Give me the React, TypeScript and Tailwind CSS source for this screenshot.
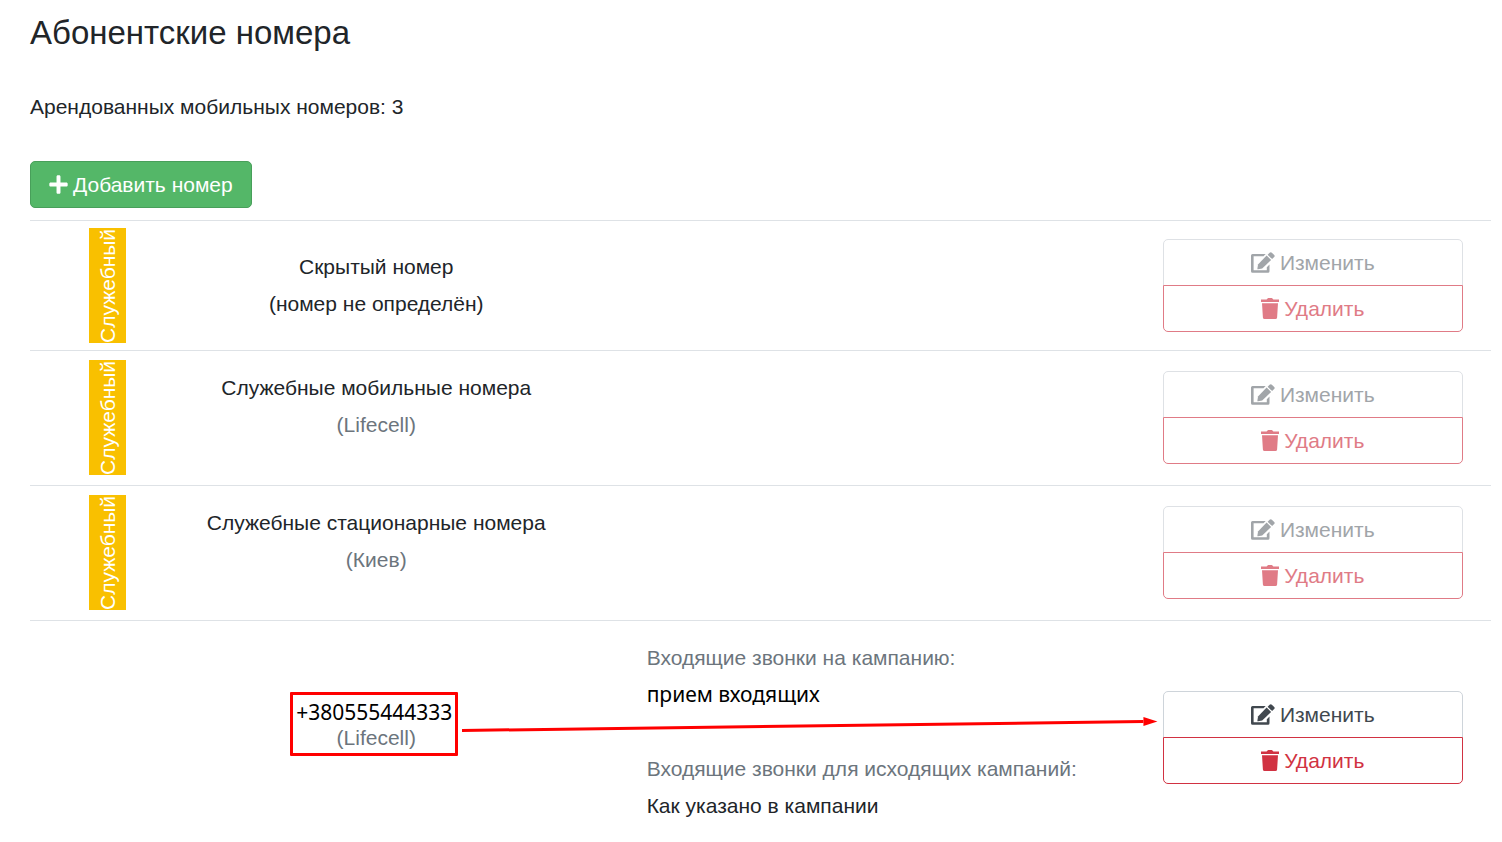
import type { ReactNode } from 'react';
import { FaPlus } from 'react-icons/fa';

type NumberRow = {
  id: number;
  service: boolean;
  name: ReactNode;
  details?: ReactNode;
  height: string;
};

const rows: NumberRow[] = [
  {
    id: 1,
    service: true,
    height: 'h-[130px]',
    name: (
      <div className="pb-0.5">
        <p>Скрытый номер</p>
        <p>(номер не определён)</p>
      </div>
    ),
  },
  {
    id: 2,
    service: true,
    height: 'h-[135px]',
    name: (
      <div className="pb-6">
        <p>Служебные мобильные номера</p>
        <p className="text-[#6c757d]">(Lifecell)</p>
      </div>
    ),
  },
  {
    id: 3,
    service: true,
    height: 'h-[135px]',
    name: (
      <div className="pb-6">
        <p>Служебные стационарные номера</p>
        <p className="text-[#6c757d]">(Киев)</p>
      </div>
    ),
  },
  {
    id: 4,
    service: false,
    height: 'h-[222px]',
    name: (
      <div className="mr-1 mb-4 flex justify-center">
        <div className="rounded-[1px] border-3 border-[#ff0000] px-[3px] pt-1 pb-0.5 leading-[26px]">
          <p className="font-['Noto_Sans',sans-serif] text-black">+380555444333</p>
          <p className="pl-1 text-[#6c757d]">(Lifecell)</p>
        </div>
      </div>
    ),
    details: (
      <>
        <p className="text-[#6c757d]">Входящие звонки на кампанию:</p>
        <p className="mb-[37px] font-['Noto_Sans',sans-serif] text-black">прием входящих</p>
        <p className="text-[#6c757d]">Входящие звонки для исходящих кампаний:</p>
        <p>Как указано в кампании</p>
      </>
    ),
  },
];

const EditIcon = () => (
  <svg viewBox="0 0 24 21" className="h-[21px] w-6" fill="currentColor" aria-hidden="true">
    <path d="M1.5 2h13.2l-2.2 2.2H2.6v14.1h13.2v-3l2.7-2.7v6.7q0 1.5-1.5 1.5H1.5Q0 20.800 0 19.300V3.500Q0 2 1.500 2z" />
    <path d="M15.600 3.600l4.500 4.300-8.900 8.500-4.200.9q-.7.100-.6-.6l.6-4.200z" />
    <path d="M16.600 2.700l2-1.900q1.100-1 2.300 0l2.300 2.200q1 1.100 0 2.100l-2.100 2z" />
  </svg>
);

const TrashIcon = () => (
  <svg viewBox="0 0 18 21" className="h-[21px] w-[18px]" fill="currentColor" aria-hidden="true">
    <path d="M0 1.600h5.600L6.500.500Q6.800.100 7.300.100h3.400q.5 0 .8.400l.9 1.100H18v2.400H0z" />
    <path d="M1 5.300h16l-.9 14.100q-.1 1.600-1.700 1.600H3.600q-1.600 0-1.700-1.600z" />
  </svg>
);

const ServiceBadge = () => (
  <div className="flex justify-center">
    <span className="flex h-[115px] w-[37px] rotate-180 items-center justify-center bg-[#f9c000] leading-[37px] whitespace-nowrap text-white [writing-mode:vertical-rl]">
      Служебный
    </span>
  </div>
);

const RowActions = ({ disabled }: { disabled: boolean }) => (
  <div className="flex flex-col">
    <button
      type="button"
      disabled={disabled}
      className="flex h-[47px] items-center justify-center gap-[5px] rounded-t-[5px] border border-[#ced4da] text-[#41484f] disabled:border-[#dee1e5] disabled:text-[#a1a5a9]"
    >
      <EditIcon />
      Изменить
    </button>
    <button
      type="button"
      disabled={disabled}
      className="-mt-px flex h-[47px] items-center justify-center gap-[5px] rounded-b-[5px] border border-[#d13242] text-[#d13242] disabled:border-[#e07b86] disabled:text-[#e07b86]"
    >
      <TrashIcon />
      Удалить
    </button>
  </div>
);

const App = () => {
  return (
    <main className="pt-3 pr-[11px] pl-[30px] font-['Liberation_Sans',Arial,sans-serif] text-[21px] leading-[37px] text-[#212529]">
      <h1 className="text-[33px] leading-[41px]">Абонентские номера</h1>
      <p className="mt-[35px]">Арендованных мобильных номеров: 3</p>

      <button
        type="button"
        className="mt-9 mb-3 flex h-[47px] items-center gap-[5px] rounded-[5px] border border-[#489f5a] bg-[#54b768] px-[18px] text-white"
      >
        <FaPlus className="h-[21px] w-[19px]" />
        Добавить номер
      </button>

      <div className="relative">
        <table className="w-full table-fixed border-separate border-spacing-0">
          <colgroup>
            <col className="w-[10.6%]" />
            <col className="w-[26.2%]" />
            <col />
            <col className="w-[24.4%]" />
          </colgroup>
          <tbody>
            {rows.map((row) => (
              <tr key={row.id} className={row.height}>
                <td className="border-t border-[#dee2e6] pb-px align-middle">{row.service && <ServiceBadge />}</td>
                <td className="border-t border-[#dee2e6] text-center align-middle whitespace-nowrap">{row.name}</td>
                <td className="border-t border-[#dee2e6] pl-[79px] align-middle">{row.details}</td>
                <td className={`border-t border-[#dee2e6] px-7 align-middle ${row.service ? 'pb-px' : 'pt-3'}`}>
                  <RowActions disabled={row.service} />
                </td>
              </tr>
            ))}
          </tbody>
        </table>

        {/* pointer from the number to its edit button */}
        <svg
          className="pointer-events-none absolute bottom-[104px] left-[29.6%] h-5 w-[calc(47.6%-14px)] overflow-visible"
          aria-hidden="true"
        >
          <defs>
            <marker id="head" markerUnits="userSpaceOnUse" markerWidth="15" markerHeight="9" refX="0" refY="4.5">
              <path d="M0 0 14 4.5 0 9z" fill="#ff0000" />
            </marker>
          </defs>
          <line x1="0" y1="12.5" x2="100%" y2="3.5" stroke="#ff0000" strokeWidth="3" markerEnd="url(#head)" />
        </svg>
      </div>
    </main>
  );
};

export default App;
